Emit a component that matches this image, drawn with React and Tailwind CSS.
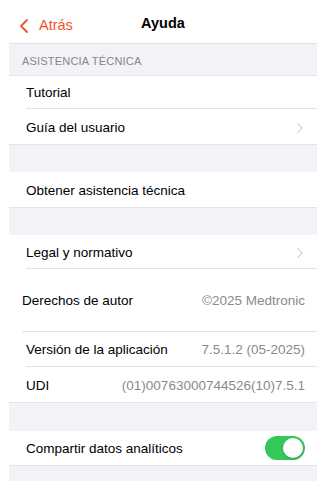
import { ChevronLeft, ChevronRight } from "lucide-react";

const Chevron = () => (
  <ChevronRight size={18} strokeWidth={1.4} className="text-[#c4c4c7] -mr-[4px]" />
);

const Row = ({ label, value, chevron, sep = true, className = "" }) => (
  <div className={`flex items-center bg-white pl-[17px] ${className}`}>
    <div className={`flex-1 flex items-center h-full pr-[12px] pt-[3px] ${sep ? "border-b border-[#e4e4e8]" : ""}`}>
      <span className="flex-1 text-[13.5px] text-black">{label}</span>
      {value && <span className="text-[13.5px] text-[#8a8a8e]">{value}</span>}
      {chevron && <Chevron />}
    </div>
  </div>
);

const Gap = ({ h = "h-[28px]" }) => (
  <div className={`${h} bg-[#f2f2f7] border-t border-[#e4e4e8]`} />
);

export default function App() {
  return (
    <div className="w-[326px] h-[489px] bg-white px-[9px] font-['Liberation_Sans',sans-serif]">
      {/* Nav */}
      <div className="relative h-[43px] flex items-end pb-[5px]">
        <div className="flex items-center text-[#ee5327] gap-[3px] pl-[3px]">
          <ChevronLeft size={24} strokeWidth={1.8} />
          <span className="text-[14.5px]">Atrás</span>
        </div>
        <div className="absolute inset-0 flex items-end justify-center pb-[8px] pointer-events-none">
          <span className="text-[14.5px] font-semibold text-black">Ayuda</span>
        </div>
      </div>

      {/* Section header */}
      <div className="h-[32px] bg-[#f2f2f7] border-t border-[#e0e0e5] flex items-end pb-[6px] px-[13px]">
        <span className="text-[11px] text-[#86868b] tracking-[0.2px]">ASISTENCIA TÉCNICA</span>
      </div>

      <Row label="Tutorial" className="h-[34px] border-t border-[#e4e4e8]" />
      <Row label="Guía del usuario" chevron sep={false} className="h-[35px]" />

      <Gap />
      <Row label="Obtener asistencia técnica" sep={false} className="h-[35px]" />

      <Gap />
      <Row label="Legal y normativo" chevron className="h-[34px]" />
      <div className="h-[63px] bg-white pl-[13px] flex">
        <div className="flex-1 flex items-center border-b border-[#e4e4e8] pr-[12px] pt-[3px]">
          <span className="flex-1 text-[13.5px] text-black">Derechos de autor</span>
          <span className="text-[13.5px] text-[#8a8a8e]">©2025 Medtronic</span>
        </div>
      </div>
      <Row label="Versión de la aplicación" value="7.5.1.2 (05-2025)" className="h-[35px]" />
      <Row label="UDI" value="(01)00763000744526(10)7.5.1" sep={false} className="h-[35px]" />

      <Gap h="h-[29px]" />
      <div className="h-[34px] bg-white pl-[17px] pr-[12px] flex items-center">
        <span className="flex-1 text-[13.5px] text-black pt-[2px]">Compartir datos analíticos</span>
        <div className="w-[40px] h-[24px] rounded-full bg-[#34c759] flex items-center justify-end p-[2px]">
          <div className="w-[20px] h-[20px] rounded-full bg-white shadow-[0_1px_2px_rgba(0,0,0,0.2)]" />
        </div>
      </div>
      <Gap h="h-[16px]" />
    </div>
  );
}
